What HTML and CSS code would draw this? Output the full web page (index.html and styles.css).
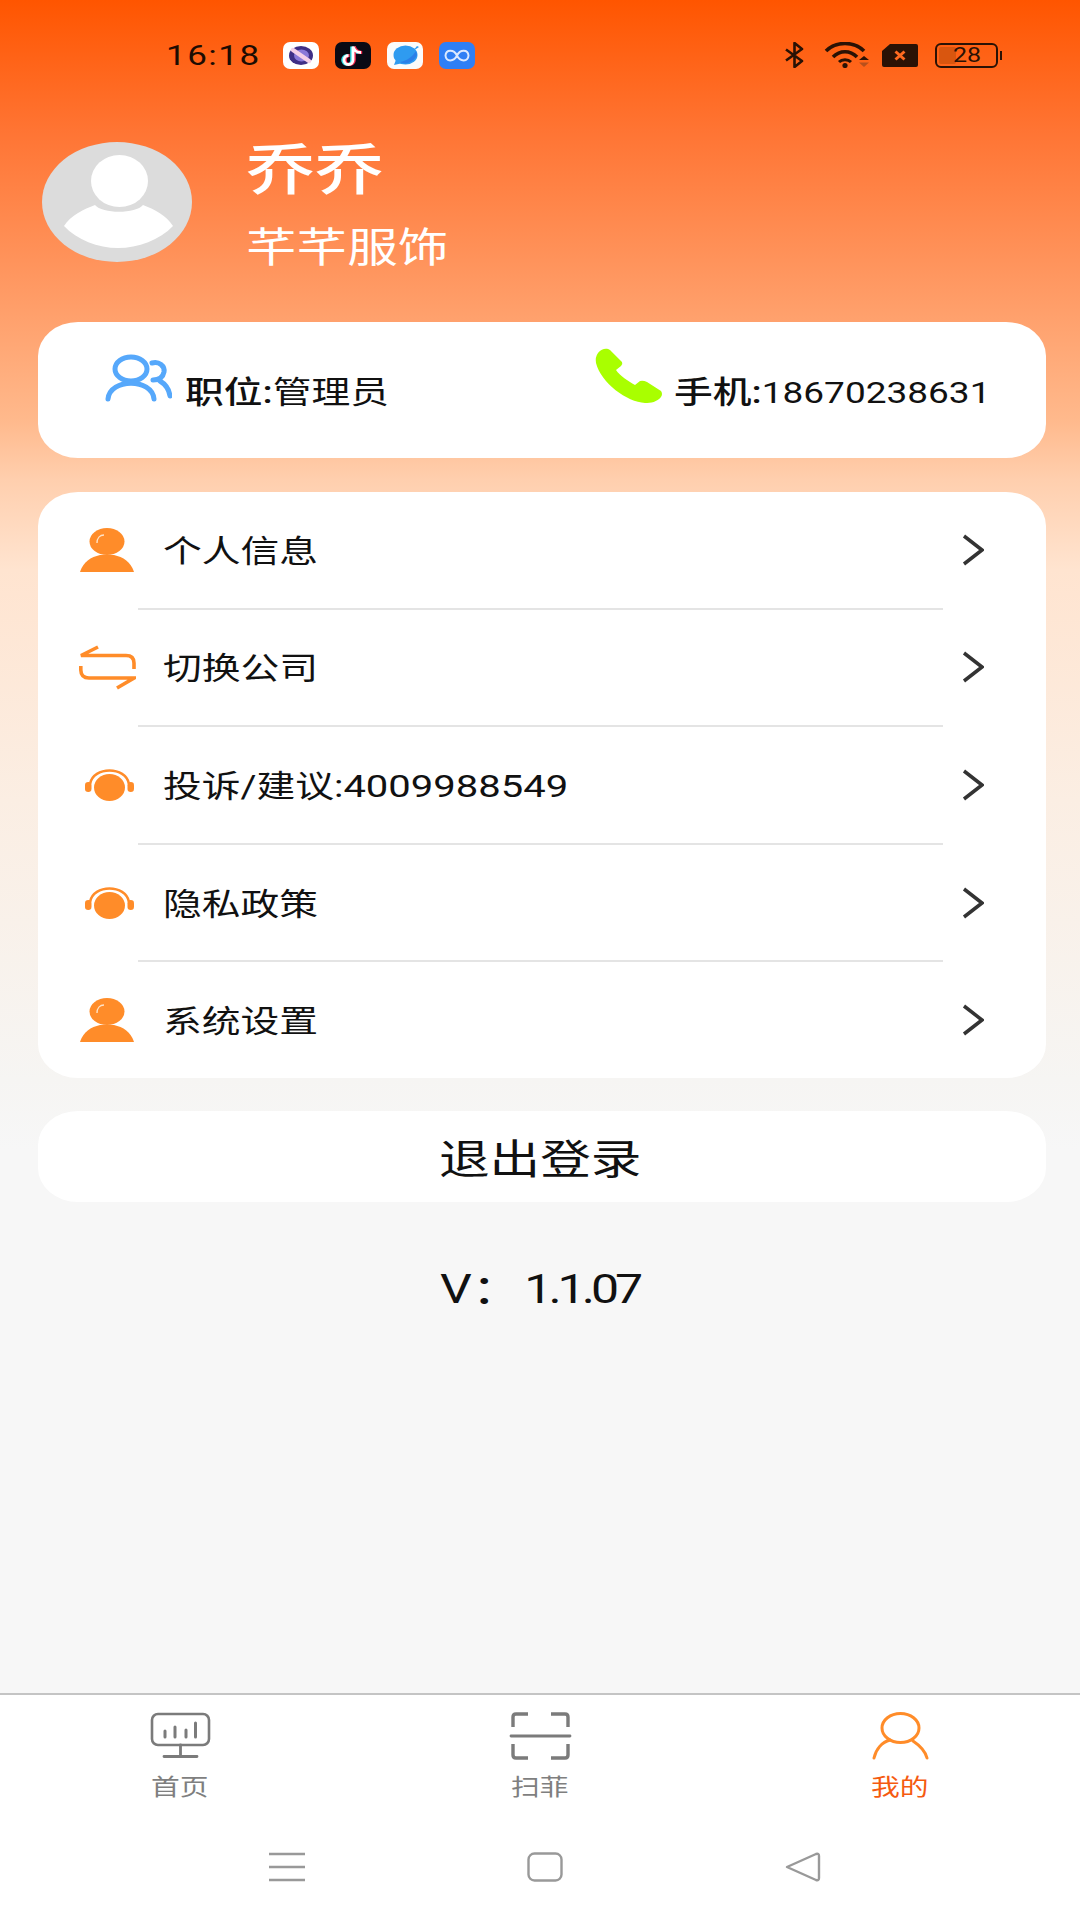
FILE: index.html
```html
<!DOCTYPE html>
<html lang="zh-CN">
<head>
    <meta charset="UTF-8">
    <meta name="viewport" content="width=device-width, initial-scale=1.0">
    <title>我的</title>
    <link rel="stylesheet" href="styles.css">
</head>
<body>
<div class="page">

    <!-- Status bar -->
    <div class="status-bar">
        <div class="status-time"><span class="wide">16:18</span></div>
        <div class="app-icons">
            <svg class="app-icon" viewBox="0 0 36 27">
                <rect width="36" height="27" rx="7" fill="#fff"/>
                <ellipse cx="18" cy="13.5" rx="12" ry="9.5" fill="#3f2f86"/>
                <ellipse cx="18.5" cy="13.5" rx="7.5" ry="6" fill="#8a78d8"/>
                <path d="M10 8 L26 19" stroke="#f4cfe8" stroke-width="4.5" stroke-linecap="round"/>
            </svg>
            <svg class="app-icon" viewBox="0 0 36 27">
                <rect width="36" height="27" rx="7" fill="#0a0a14"/>
                <path d="M18 4 V17.5 A4.5 4.5 0 1 1 13.5 13 M18 4 C19 8 22 10 26 10" fill="none" stroke="#35e0e6" stroke-width="3.2" transform="translate(-1.2 .5)"/>
                <path d="M18 4 V17.5 A4.5 4.5 0 1 1 13.5 13 M18 4 C19 8 22 10 26 10" fill="none" stroke="#ff2d55" stroke-width="3.2" transform="translate(1.2 .5)"/>
                <path d="M18 4 V17.5 A4.5 4.5 0 1 1 13.5 13 M18 4 C19 8 22 10 26 10" fill="none" stroke="#fff" stroke-width="2.8" transform="translate(0 .5)"/>
            </svg>
            <svg class="app-icon" viewBox="0 0 36 27">
                <rect width="36" height="27" rx="7" fill="#fbfbfb"/>
                <ellipse cx="18.5" cy="13" rx="12" ry="9.5" fill="#2f9bf0"/>
                <path d="M7 23 L10 15 L16 21Z M30 4 L32 5 L26 9Z" fill="#2f9bf0"/>
                <path d="M13 20 C20 19 26 14 29 9 L30 13 C27 19 20 24 13 20Z" fill="#2a7fe8"/>
            </svg>
            <svg class="app-icon" viewBox="0 0 36 27">
                <rect width="36" height="27" rx="7" fill="#2f7ff5"/>
                <path d="M18 13.5 C15 7 7 7 6.5 13.5 C7 20 15 20 18 13.5 C21 7 29 7 29.5 13.5 C29 20 21 20 18 13.5Z" fill="none" stroke="#dbe9ff" stroke-width="2"/>
            </svg>
        </div>
        <div class="status-right">
            <svg class="st-bt" viewBox="0 0 21 26">
                <path d="M2 7.5 L18 19 L10.5 25 V1 L18 7 L2 18.5" fill="none" stroke="#2a1205" stroke-width="2.6" stroke-linejoin="round"/>
            </svg>
            <svg class="st-wifi" viewBox="0 0 46 26">
                <path d="M2 9 C12 -1 30 -1 40 9" fill="none" stroke="#2a1205" stroke-width="3.6"/>
                <path d="M9 15 C16 8 26 8 33 15" fill="none" stroke="#2a1205" stroke-width="3.6"/>
                <path d="M15 20 C18 17 24 17 27 20" fill="none" stroke="#2a1205" stroke-width="3"/>
                <circle cx="21" cy="23.5" r="2.6" fill="#2a1205"/>
                <path d="M35 18 L40 14 L45 18Z" fill="#2a1205"/>
                <path d="M35 20.5 L45 20.5 L40 25Z" fill="#b8501c"/>
            </svg>
            <svg class="st-sim" viewBox="0 0 36 23">
                <path d="M8 0 H34 Q36 0 36 2 V21 Q36 23 34 23 H2 Q0 23 0 21 V7Z" fill="#2a1205"/>
                <path d="M13.5 7.5 L22.5 15.5 M22.5 7.5 L13.5 15.5" stroke="#ff6a20" stroke-width="3"/>
            </svg>
            <div class="st-battery">
                <div class="battery-level"></div>
                <span class="battery-num">28</span>
            </div>
            <div class="battery-tip"></div>
        </div>
    </div>

    <!-- Profile -->
    <div class="profile">
        <svg class="avatar" viewBox="0 0 150 120">
            <ellipse cx="75" cy="60" rx="75" ry="60" fill="#dcdcdc"/>
            <ellipse cx="77.5" cy="39" rx="28.5" ry="26" fill="#fff"/>
            <path d="M22 84 C28 74 42 67 53 63 C60 72 94 72 101 63 C112 67 125 74 131 84 C118 98 96 106 76 106 C56 106 35 98 22 84Z" fill="#fff"/>
        </svg>
        <div class="profile-text">
            <div class="profile-name"><span class="wide">乔乔</span></div>
            <div class="profile-company"><span class="wide">芊芊服饰</span></div>
        </div>
    </div>

    <!-- Position and phone -->
    <div class="info-card">
        <div class="info-item">
            <svg class="info-group" viewBox="0 0 67 48">
                <g fill="none" stroke="#56a8fb" stroke-width="5" stroke-linecap="round">
                    <ellipse cx="26" cy="15" rx="16" ry="12"/>
                    <path d="M3 45 C5 24 47 24 49 45"/>
                    <path d="M47 9 C54 7 60 12 59 18 C58 23 54 26 48 26"/>
                    <path d="M55 27 C60 30 64 35 65 42"/>
                </g>
            </svg>
            <div class="info-text"><span class="wide"><b>职位:</b>管理员</span></div>
        </div>
        <div class="info-item">
            <svg class="info-phone" viewBox="0 0 68 55">
                <path d="M3 5 C7 0 12 0 15 2 L27 14 Q28 16 26 18 L21 22 C25 28 33 33 40 37 L45 33 Q48 32 52 34 L66 43 Q68 46 66 49 C62 54 56 55 50 55 C32 54 6 35 1 15 Q0 9 3 5Z" fill="#a9ff00"/>
            </svg>
            <div class="info-text"><span class="wide"><b>手机:</b><span class="info-num">18670238631</span></span></div>
        </div>
    </div>

    <!-- Menu -->
    <div class="menu-card">
        <div class="menu-row">
            <div class="menu-icon">
                <svg class="ic-person" viewBox="0 0 54 44">
                    <path d="M0 44 C3 34 11 29 20 27 H34 C43 29 51 34 54 44Z" fill="#ff8c29"/>
                    <ellipse cx="27" cy="13.5" rx="17.5" ry="13.5" fill="#ff8c29"/>
                    <path d="M17 15 C17 10 20 7 24 7" fill="none" stroke="#ffe3c8" stroke-width="1.4"/>
                </svg>
            </div>
            <div class="menu-text"><span class="wide">个人信息</span></div>
            <svg class="chevron" viewBox="0 0 22 32"><path d="M2 2 L20 16 L2 30" fill="none" stroke="#333" stroke-width="3.5"/></svg>
        </div>
        <div class="menu-line"></div>
        <div class="menu-row">
            <div class="menu-icon">
                <svg class="ic-swap" viewBox="0 0 57 45">
                    <g fill="none" stroke="#ff8c29" stroke-width="3.6">
                        <path d="M19 2 L2 10.5 H47 Q55 10.5 55 18 V24"/>
                        <path d="M1.8 21 V25 Q2 33 10 33 H55 L38 43"/>
                    </g>
                </svg>
            </div>
            <div class="menu-text"><span class="wide">切换公司</span></div>
            <svg class="chevron" viewBox="0 0 22 32"><path d="M2 2 L20 16 L2 30" fill="none" stroke="#333" stroke-width="3.5"/></svg>
        </div>
        <div class="menu-line"></div>
        <div class="menu-row">
            <div class="menu-icon">
                <svg class="ic-headset" viewBox="0 0 49 32">
                    <ellipse cx="24.5" cy="18.5" rx="15.5" ry="13.5" fill="#ff8c29"/>
                    <path d="M5 15 C8 -3 41 -3 44 15" fill="none" stroke="#ff8c29" stroke-width="2.5"/>
                    <rect x="0" y="13" width="6.5" height="10" rx="3.2" fill="#ff8c29"/>
                    <rect x="42.5" y="13" width="6.5" height="10" rx="3.2" fill="#ff8c29"/>
                </svg>
            </div>
            <div class="menu-text"><span class="wide">投诉/建议:<span class="menu-num">4009988549</span></span></div>
            <svg class="chevron" viewBox="0 0 22 32"><path d="M2 2 L20 16 L2 30" fill="none" stroke="#333" stroke-width="3.5"/></svg>
        </div>
        <div class="menu-line"></div>
        <div class="menu-row">
            <div class="menu-icon">
                <svg class="ic-headset" viewBox="0 0 49 32">
                    <ellipse cx="24.5" cy="18.5" rx="15.5" ry="13.5" fill="#ff8c29"/>
                    <path d="M5 15 C8 -3 41 -3 44 15" fill="none" stroke="#ff8c29" stroke-width="2.5"/>
                    <rect x="0" y="13" width="6.5" height="10" rx="3.2" fill="#ff8c29"/>
                    <rect x="42.5" y="13" width="6.5" height="10" rx="3.2" fill="#ff8c29"/>
                </svg>
            </div>
            <div class="menu-text"><span class="wide">隐私政策</span></div>
            <svg class="chevron" viewBox="0 0 22 32"><path d="M2 2 L20 16 L2 30" fill="none" stroke="#333" stroke-width="3.5"/></svg>
        </div>
        <div class="menu-line"></div>
        <div class="menu-row">
            <div class="menu-icon">
                <svg class="ic-person" viewBox="0 0 54 44">
                    <path d="M0 44 C3 34 11 29 20 27 H34 C43 29 51 34 54 44Z" fill="#ff8c29"/>
                    <ellipse cx="27" cy="13.5" rx="17.5" ry="13.5" fill="#ff8c29"/>
                    <path d="M17 15 C17 10 20 7 24 7" fill="none" stroke="#ffe3c8" stroke-width="1.4"/>
                </svg>
            </div>
            <div class="menu-text"><span class="wide">系统设置</span></div>
            <svg class="chevron" viewBox="0 0 22 32"><path d="M2 2 L20 16 L2 30" fill="none" stroke="#333" stroke-width="3.5"/></svg>
        </div>
    </div>

    <div class="logout-btn"><span class="wide">退出登录</span></div>
    <div class="version"><span class="wide">V：<span class="version-num">1.1.07</span></span></div>

    <!-- Bottom tabs -->
    <div class="tab-bar">
        <div class="tab">
            <svg class="tab-icon" viewBox="0 0 63 50">
                <g fill="none" stroke="#7b7b7b" stroke-width="2.6" stroke-linecap="round">
                    <rect x="3" y="3" width="57" height="31" rx="6"/>
                    <path d="M31.5 34 V45 M15 45.5 H48" stroke-width="2.8"/>
                    <path d="M16 20 V26 M26 16 V26 M37 19 V26 M46.5 12 V26" stroke-width="3"/>
                </g>
            </svg>
            <div class="tab-label"><span class="wide">首页</span></div>
        </div>
        <div class="tab">
            <svg class="tab-icon" viewBox="0 0 63 50">
                <g fill="none" stroke="#7b7b7b" stroke-linecap="butt" stroke-width="3.4">
                    <path d="M19 3 H7 Q4 3 4 6 V16"/>
                    <path d="M42 3 H56 Q59 3 59 6 V16"/>
                    <path d="M4 33 V44 Q4 47 7 47 H19"/>
                    <path d="M59 33 V44 Q59 47 56 47 H42"/>
                    <path d="M2 25 H61" stroke-linecap="round" stroke-width="2.8"/>
                </g>
            </svg>
            <div class="tab-label"><span class="wide">扫菲</span></div>
        </div>
        <div class="tab tab-active">
            <svg class="tab-icon" viewBox="0 0 63 50">
                <g fill="none" stroke="#ff8c29" stroke-width="3" stroke-linecap="round">
                    <ellipse cx="31.5" cy="17" rx="18.5" ry="14.5"/>
                    <path d="M5 47 C7 38 13 31 21 29"/>
                    <path d="M44 30 C50 34 56 39 58 47"/>
                </g>
            </svg>
            <div class="tab-label"><span class="wide">我的</span></div>
        </div>
    </div>

    <!-- System navigation -->
    <div class="nav-bar">
        <svg class="nav-icon" viewBox="0 0 36 30">
            <path d="M0 2 H36 M0 15 H36 M0 28 H36" stroke="#999" stroke-width="2.4"/>
        </svg>
        <svg class="nav-icon" viewBox="0 0 36 30">
            <rect x="1.5" y="1.5" width="33" height="27" rx="6" fill="none" stroke="#999" stroke-width="2.4"/>
        </svg>
        <svg class="nav-icon" viewBox="0 0 36 30">
            <path d="M2 15 L31 2 Q34 1 34 4 V26 Q34 29 31 28Z" fill="none" stroke="#999" stroke-width="2.4" stroke-linejoin="round"/>
        </svg>
    </div>

</div>
</body>
</html>
```

FILE: styles.css
```css
* {
    box-sizing: border-box;
}
body {
    margin: 0;
    font-family: Roboto, "Noto Sans CJK SC", sans-serif;
    color: #111;
}
.page {
    width: 1080px;
    height: 1920px;
    display: flex;
    flex-direction: column;
    background: linear-gradient(180deg, #ff5500 0, #ff7433 130px, #ffb98c 420px, #ffcfae 480px, #ffe4d0 570px, #fbeee3 800px, #f6f5f3 1080px, #f7f7f7 1150px);
}
/* the whole screen is stretched sideways, so text is too */
.wide {
    display: inline-block;
    transform: scaleX(1.25);
    transform-origin: left center;
    white-space: nowrap;
}

/* Status bar */
.status-bar {
    height: 110px;
    flex: none;
    display: flex;
    align-items: center;
    padding: 0 78px 0 166px;
}
.status-time {
    width: 117px;
    font-size: 28px;
    letter-spacing: 1.2px;
    color: #1c0c02;
}
.app-icons {
    display: flex;
    gap: 16px;
}
.app-icon {
    width: 36px;
    height: 27px;
}
.status-right {
    margin-left: auto;
    display: flex;
    align-items: center;
}
.st-bt {
    width: 21px;
    height: 26px;
    margin-right: 19px;
}
.st-wifi {
    width: 46px;
    height: 26px;
    margin-right: 12px;
}
.st-sim {
    width: 36px;
    height: 23px;
    margin-right: 17px;
}
.st-battery {
    position: relative;
    width: 63px;
    height: 25px;
    border: 2px solid #2a1205;
    border-radius: 6px;
    overflow: hidden;
}
.battery-level {
    position: absolute;
    left: 2px;
    top: 2px;
    bottom: 2px;
    width: 17px;
    background: #d9560f;
    border-radius: 2px;
}
.battery-num {
    position: absolute;
    left: 16px;
    top: -2px;
    font-size: 20px;
    line-height: 25px;
    color: #2a1205;
    transform: scaleX(1.25);
    transform-origin: left center;
}
.battery-tip {
    width: 2px;
    height: 9px;
    margin-left: 2px;
    background: #2a1205;
}

/* Profile */
.profile {
    flex: none;
    display: flex;
    height: 120px;
    margin: 32px 0 60px 42px;
}
.avatar {
    width: 150px;
    height: 120px;
}
.profile-text {
    margin-left: 54px;
    color: #fff;
}
.profile-name {
    font-size: 55px;
    font-weight: 500;
    line-height: 56px;
}
.profile-company {
    font-size: 40.5px;
    line-height: 50px;
    margin-top: 25px;
}

/* Cards */
.info-card {
    flex: none;
    height: 136px;
    margin: 0 34px 34px 38px;
    padding: 0 0 47px 67px;
    background: #fff;
    border-radius: 40px / 34px;
    display: grid;
    grid-template-columns: 490px 1fr;
    align-items: end;
}
.info-item {
    display: flex;
    align-items: flex-end;
}
.info-group {
    width: 67px;
    height: 48px;
    margin: 0 13px 9px 0;
}
.info-phone {
    width: 68px;
    height: 55px;
    margin: 0 11px 8px 0;
}
.info-text {
    font-size: 31px;
    line-height: 36px;
}
.info-text b {
    font-weight: 500;
}
.info-num {
    font-size: 29.6px;
}
.menu-card {
    flex: none;
    height: 586px;
    margin: 0 34px 33px 38px;
    background: #fff;
    border-radius: 40px / 34px;
    display: flex;
    flex-direction: column;
}
.menu-row {
    flex: 1;
    display: flex;
    align-items: center;
    padding: 0 62px 0 41px;
}
.menu-line {
    height: 2px;
    margin: 0 103px 0 100px;
    background: #e4e4e4;
}
.menu-icon {
    width: 57px;
    margin-right: 27px;
    display: flex;
    justify-content: center;
}
.ic-person {
    width: 54px;
    height: 44px;
    margin-left: -1px;
}
.ic-swap {
    width: 57px;
    height: 45px;
}
.ic-headset {
    width: 49px;
    height: 32px;
    margin-left: 3px;
}
.menu-text {
    font-size: 31px;
    line-height: 40px;
    padding-top: 4px;
}
.menu-num {
    font-size: 32px;
}
.chevron {
    width: 22px;
    height: 32px;
    margin-left: auto;
}
.logout-btn {
    flex: none;
    height: 91px;
    margin: 0 34px 0 38px;
    padding: 7px 0 0 401px;
    background: #fff;
    border-radius: 40px / 34px;
    font-size: 40.5px;
    line-height: 84px;
}
.version {
    flex: none;
    font-size: 40px;
    line-height: 50px;
    margin-top: 63px;
    padding-left: 440px;
}
.version-num {
    margin-left: 2px;
    letter-spacing: -3.2px;
}

/* Bottom tabs */
.tab-bar {
    margin-top: auto;
    flex: none;
    height: 134px;
    border-top: 2px solid #c4c4c4;
    background: #fff;
    display: grid;
    grid-template-columns: repeat(3, 1fr);
    padding-top: 16px;
}
.tab {
    display: flex;
    flex-direction: column;
    align-items: center;
    color: #7f7f7f;
}
.tab-active {
    color: #f55a0f;
}
.tab-icon {
    width: 63px;
    height: 50px;
}
.tab-label {
    width: 58px;
    margin-top: 13px;
    font-size: 23px;
    line-height: 28px;
}
.nav-bar {
    flex: none;
    height: 93px;
    background: #fff;
    display: grid;
    grid-template-columns: repeat(3, 258px);
    justify-content: center;
    justify-items: center;
    padding: 25px 0 0 10px;
    align-items: start;
}
.nav-icon {
    width: 36px;
    height: 30px;
}
```
